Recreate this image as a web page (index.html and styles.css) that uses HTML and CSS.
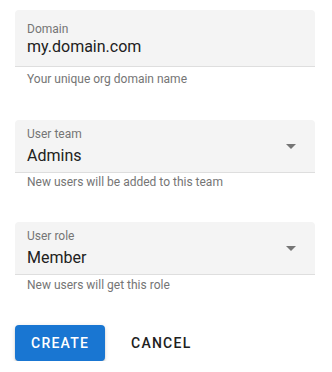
FILE: index.html
```html
<!DOCTYPE html>
<html>
<head>
<meta charset="utf-8">
<link rel="stylesheet" href="styles.css">
</head>
<body>
<form class="form">
  <div class="group group-first">
    <div class="field field-input">
      <span class="label">Domain</span>
      <span class="value">my.domain.com</span>
    </div>
    <div class="helper helper-first">Your unique org domain name</div>
  </div>
  <div class="group">
    <div class="field field-select">
      <div class="select-text">
        <span class="label">User team</span>
        <span class="value value-select">Admins</span>
      </div>
      <svg class="arrow" width="24" height="24" viewBox="0 0 24 24"><path d="M7 10l5 5 5-5z"/></svg>
    </div>
    <div class="helper">New users will be added to this team</div>
  </div>
  <div class="group">
    <div class="field field-select">
      <div class="select-text">
        <span class="label">User role</span>
        <span class="value value-select">Member</span>
      </div>
      <svg class="arrow" width="24" height="24" viewBox="0 0 24 24"><path d="M7 10l5 5 5-5z"/></svg>
    </div>
    <div class="helper helper-last">New users will get this role</div>
  </div>
  <div class="actions">
    <button type="button" class="btn btn-primary">Create</button>
    <button type="button" class="btn btn-text">Cancel</button>
  </div>
</form>
</body>
</html>
```

FILE: styles.css
```css
* { box-sizing: border-box; }
html, body { margin: 0; padding: 0; background: #fff; }
body {
  font-family: Roboto, "Noto Sans", Arial, sans-serif;
  padding: 10px 17px 0 15px;
  -webkit-font-smoothing: antialiased;
}
.form { display: flex; flex-direction: column; width: 300px; }
.group { display: flex; flex-direction: column; margin-bottom: 32px; }
.group-first { margin-bottom: 33px; }
.field {
  background: #f4f4f4;
  border-radius: 4px 4px 0 0;
  border-bottom: 1px solid #dedede;
  padding: 0 12px;
}
.field-input {
  display: flex;
  flex-direction: column;
  padding-top: 12px;
  height: 57px;
}
.field-select {
  display: flex;
  align-items: center;
  height: 53px;
  padding-right: 12px;
}
.select-text {
  flex: 1;
  display: flex;
  flex-direction: column;
  padding-top: 7px;
  align-self: flex-start;
}
.label {
  font-size: 12px;
  line-height: 15px;
  color: #757575;
}
.value {
  font-size: 16px;
  line-height: 19px;
  color: #212121;
}
.value-select { margin-top: 4px; }
.arrow { fill: #757575; flex: none; margin-top: -1px; }
.helper {
  font-size: 12px;
  line-height: 15px;
  color: #757575;
  padding-left: 12px;
  margin-top: 2px;
}
.helper-first { margin-top: 5px; }
.helper-last { margin-top: 3px; }
.actions { display: flex; align-items: center; gap: 10px; }
.btn {
  font-family: Roboto, "Noto Sans", Arial, sans-serif;
  font-size: 14px;
  font-weight: 500;
  letter-spacing: 1.25px;
  text-transform: uppercase;
  height: 36px;
  padding: 0 16px;
  border: none;
  border-radius: 4px;
  cursor: pointer;
}
.btn-primary {
  background: #1976d2;
  color: #fff;
  width: 90px;
  box-shadow: 0 3px 1px -2px rgba(0,0,0,.2), 0 2px 2px 0 rgba(0,0,0,.14), 0 1px 5px 0 rgba(0,0,0,.12);
}
.btn-text {
  background: transparent;
  color: #212121;
}
```
